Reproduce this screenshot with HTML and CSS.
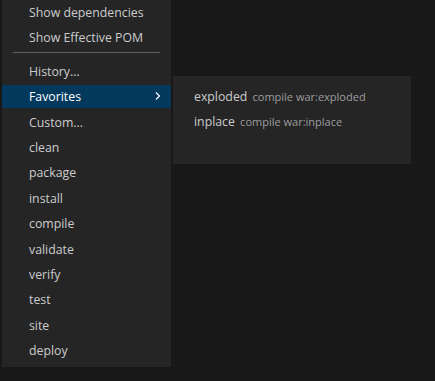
FILE: index.html
```html
<!DOCTYPE html>
<html lang="en">
<head>
  <meta charset="UTF-8">
  <title>maven menu</title>
  <link rel="stylesheet" href="styles.css">
</head>
<body>
  <div class="menus">
    <div class="menu">
      <div class="item">Show dependencies</div>
      <div class="item">Show Effective POM</div>
      <div class="sep"></div>
      <div class="item">History...</div>
      <div class="item active">Favorites
        <svg class="chev" width="10" height="10" viewBox="0 0 10 10"><path d="M3 1.5 L6.5 5 L3 8.5" fill="none" stroke="#fff" stroke-width="1.2"/></svg>
      </div>
      <div class="item">Custom...</div>
      <div class="item">clean</div>
      <div class="item">package</div>
      <div class="item">install</div>
      <div class="item">compile</div>
      <div class="item">validate</div>
      <div class="item">verify</div>
      <div class="item">test</div>
      <div class="item">site</div>
      <div class="item">deploy</div>
    </div>

    <div class="submenu">
      <div class="sub-item">exploded <span class="desc">compile war:exploded</span></div>
      <div class="sub-item">inplace <span class="desc">compile war:inplace</span></div>
    </div>
  </div>
</body>
</html>
```

FILE: styles.css
```css
body {
  margin: 0;
  background: #181818;
  font-family: "Open Sans", "Noto Sans", sans-serif;
  font-size: 12.3px;
  color: #cccccc;
}
.menus {
  display: flex;
  align-items: flex-start;
}
.menu {
  margin-left: 2px;
  width: 169px;
  background: #252526;
  padding-bottom: 4px;
}
.item {
  height: 25.4px;
  line-height: 25.4px;
  padding-left: 27px;
  position: relative;
  white-space: nowrap;
}
.item.active {
  background: #04395e;
  color: #ffffff;
  margin-top: 1px;
  height: 23px;
  line-height: 23px;
  margin-bottom: 1.4px;
}
.chev {
  position: absolute;
  right: 8px;
  top: 6px;
}
.sep {
  height: 1px;
  background: #606060;
  margin: 1px 11px 6px 11px;
}
.submenu {
  margin-top: 76px;
  margin-left: 2px;
  width: 238px;
  height: 80px;
  padding-top: 8px;
  background: #252526;
}
.sub-item {
  height: 25.4px;
  line-height: 25.4px;
  padding-left: 21px;
  white-space: nowrap;
}
.desc {
  font-size: 11px;
  color: #9d9d9d;
  margin-left: 2px;
}
```
